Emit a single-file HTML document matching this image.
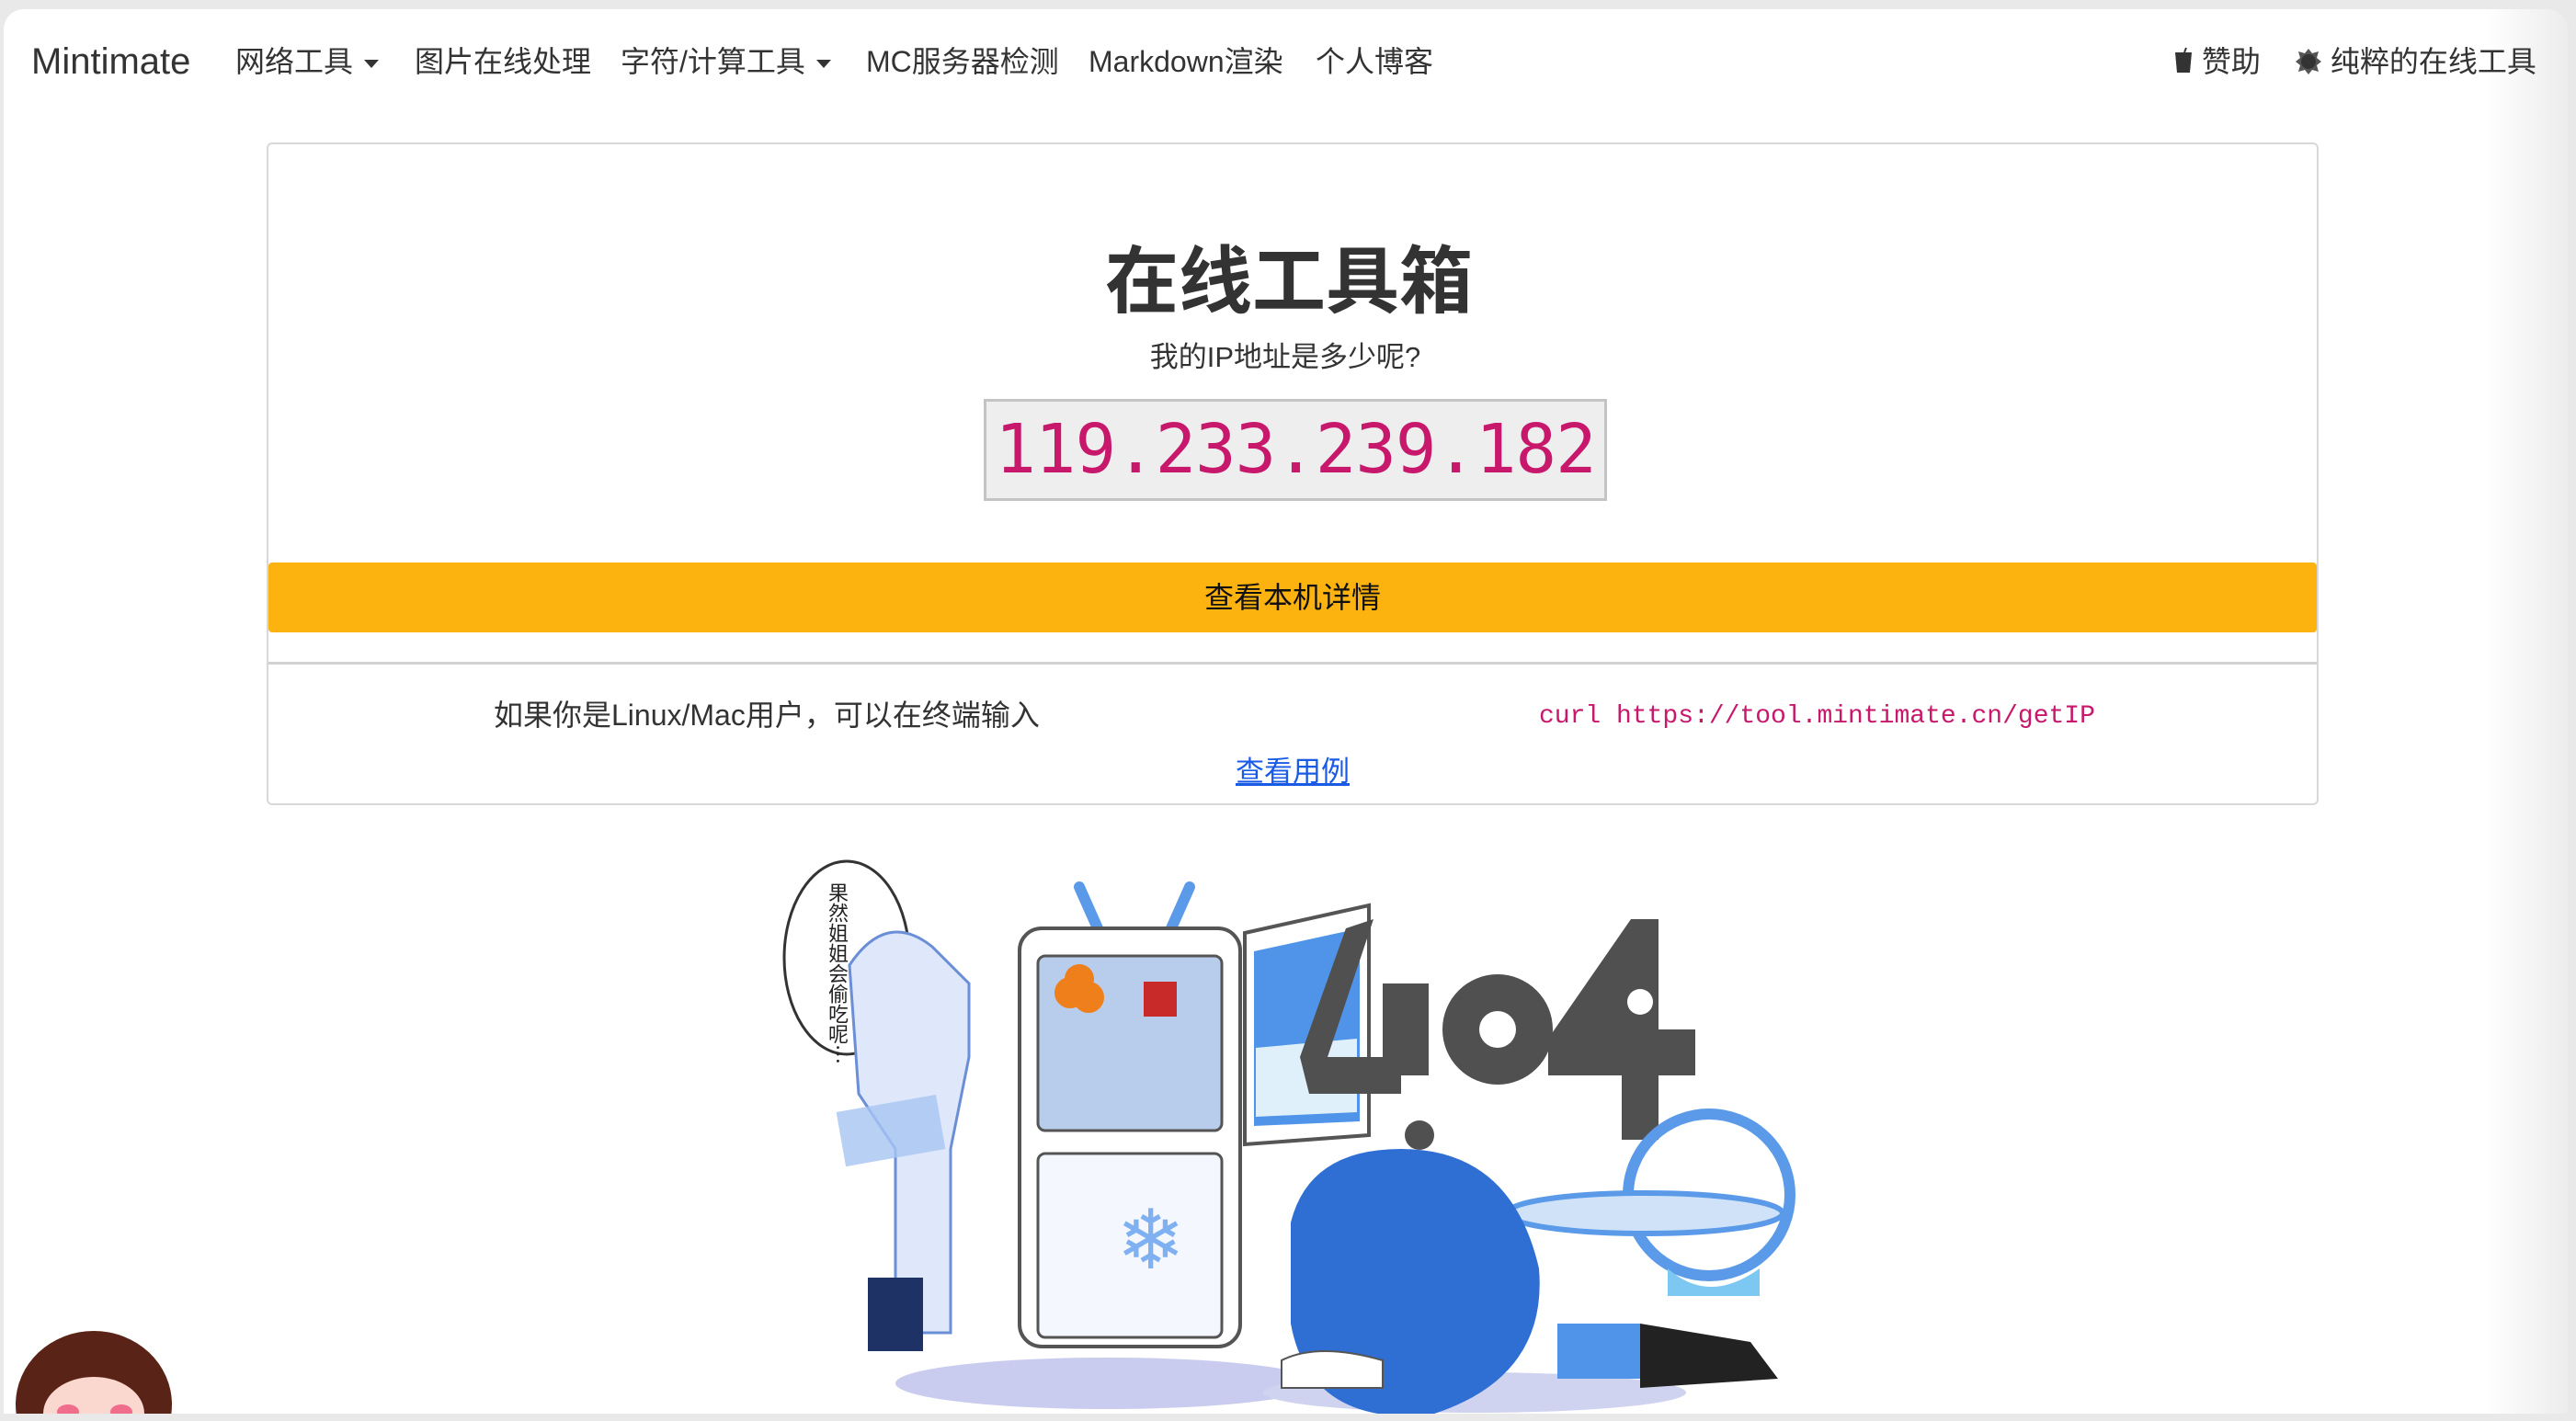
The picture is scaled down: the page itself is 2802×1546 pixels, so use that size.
<!DOCTYPE html>
<html><head><meta charset="utf-8"><style>
*{margin:0;padding:0;box-sizing:border-box}
body{width:2802px;height:1546px;background:#e9e9e9;overflow:hidden;font-family:"Liberation Sans","Noto Sans CJK SC",sans-serif;color:#333;position:relative}
.win{position:absolute;left:4px;top:10px;width:2789px;height:1528px;background:linear-gradient(90deg,#fff 0,#fff 2700px,#ececec 2789px);border-radius:22px 22px 0 0;overflow:hidden}
.nav{position:absolute;top:31px;left:0;width:100%;height:52px;font-size:32px;color:#333}
.nav span{position:absolute;top:0;white-space:nowrap;line-height:52px}
.caret{display:inline-block;border-top:9px solid #333;border-left:8px solid transparent;border-right:8px solid transparent;vertical-align:middle;margin-left:12px}
.card{position:absolute;left:286px;top:145px;width:2232px;height:721px;border:2px solid #d8d8d8;border-radius:6px;background:#fff}
.c{position:absolute;left:0;width:100%;text-align:center}
.ip{position:absolute;left:778px;top:277px;width:678px;height:111px;background:#eee;border:3px solid #c4c4c4;font-family:"DejaVu Sans Mono","Liberation Mono",monospace;color:#c7186c;font-size:74px;text-align:center;line-height:105px;letter-spacing:-1px}
.btn{position:absolute;left:0;top:455px;width:100%;height:76px;background:#fcb310;border-radius:4px;text-align:center;font-size:32px;line-height:76px;color:#111}
</style></head><body>
<div class="win">
<div class="nav">
<span style="left:30px;font-size:40px">Mintimate</span>
<span style="left:252px">网络工具<i class="caret"></i></span>
<span style="left:447px">图片在线处理</span>
<span style="left:671px">字符/计算工具<i class="caret"></i></span>
<span style="left:938px">MC服务器检测</span>
<span style="left:1180px">Markdown渲染</span>
<span style="left:1427px">个人博客</span>
<span style="left:2360px"><svg width="22" height="30" viewBox="0 0 22 30" style="vertical-align:-3px"><path d="M2 6h18l-2 22H4z" fill="#333"/><path d="M12 6l2-5" stroke="#333" stroke-width="2"/></svg> 赞助</span>
<span style="left:2492px"><svg width="30" height="30" viewBox="0 0 30 30" style="vertical-align:-4px"><polygon points="15,1 19,6 26,4 24,11 29,15 24,19 26,26 19,24 15,29 11,24 4,26 6,19 1,15 6,11 4,4 11,6" fill="#555"/><circle cx="15" cy="15" r="8" fill="#333"/></svg> 纯粹的在线工具</span>
</div>
<div class="card">
<div class="c" style="top:100px;font-size:80px;font-weight:bold;line-height:100px;color:#333;margin-left:-4px">在线工具箱</div>
<div class="c" style="top:212px;font-size:31px;line-height:40px;margin-left:-8px">我的IP地址是多少呢?</div>
<div class="ip">119.233.239.182</div>
<div class="btn">查看本机详情</div>
<div style="position:absolute;left:0;top:563px;width:100%;border-top:3px solid #d2d2d2"></div>
<div style="position:absolute;left:245px;top:601px;font-size:32px;line-height:40px">如果你是Linux/Mac用户，可以在终端输入</div>
<div style="position:absolute;left:1382px;top:603px;font-size:28px;line-height:40px;font-family:'Liberation Mono',monospace;color:#c7186c">curl https://tool.mintimate.cn/getIP</div>
<div class="c" style="top:663px;font-size:31px;line-height:40px"><u style="color:#1a5be6">查看用例</u></div>
</div>
<svg style="position:absolute;left:830px;top:900px" width="1160" height="640" viewBox="830 900 1160 640">
<ellipse cx="1200" cy="1495" rx="230" ry="28" fill="#c9ccee"/>
<ellipse cx="1600" cy="1505" rx="230" ry="22" fill="#d0d3f0"/>
<ellipse cx="917" cy="1032" rx="68" ry="105" fill="#fff" stroke="#333" stroke-width="3"/>
<text x="908" y="950" font-size="22" font-family="Noto Sans CJK SC" fill="#222" writing-mode="tb">果然姐姐会偷吃呢…</text>
<circle cx="934" cy="1150" r="6" fill="none" stroke="#333" stroke-width="2"/>
<path d="M920 1040 q40-60 90-20 l40 40 v80 l-20 100 v200 h-60 v-200 l-40-60z" fill="#dfe8fb" stroke="#6b8fd6" stroke-width="3"/>
<path d="M940 1380h60v80h-60z" fill="#1e3266"/>
<rect x="910" y="1190" width="110" height="60" fill="#a7c4f3" opacity=".8" transform="rotate(-10 965 1220)"/>
<path d="M1170 955l20 45M1290 955l-20 45" stroke="#5a9ae8" stroke-width="12" stroke-linecap="round"/>
<rect x="1105" y="1000" width="240" height="455" rx="24" fill="#fff" stroke="#555" stroke-width="4"/>
<rect x="1125" y="1030" width="200" height="190" rx="8" fill="#b8ccec" stroke="#555" stroke-width="3"/>
<rect x="1125" y="1245" width="200" height="200" rx="8" fill="#f4f7fd" stroke="#555" stroke-width="3"/>
<circle cx="1160" cy="1070" r="17" fill="#ef7f1a"/><circle cx="1180" cy="1075" r="17" fill="#ef7f1a"/><circle cx="1170" cy="1055" r="16" fill="#ef7f1a"/>
<rect x="1240" y="1058" width="36" height="38" fill="#c82a2a"/>
<text x="1210" y="1370" font-size="90" fill="#7fb1f2" font-family="DejaVu Sans">❄</text>
<path d="M1350 1005l135-30v250l-135 10z" fill="#fff" stroke="#555" stroke-width="4"/>
<path d="M1360 1025l115-25v210l-115 5z" fill="#4f94e8"/>
<path d="M1362 1130l110-10v80l-110 5z" fill="#dff0fb"/>
<g fill="#505050">
<path d="M1460 1000 l30-10 l-50 150 h80 l0 40 h-100 l-10-40z"/>
<path d="M1500 1060h50v100h-50z"/>
<ellipse cx="1625" cy="1110" rx="60" ry="60"/>
<path d="M1770 990 l30 0 l0 120 l40 0 0 50 -40 0 0 70 -40 0 0-70 -80 0 0-40z"/>
<circle cx="1540" cy="1225" r="16"/><circle cx="1545" cy="1258" r="10"/>
</g>
<circle cx="1625" cy="1110" r="20" fill="#fff"/>
<circle cx="1780" cy="1080" r="14" fill="#fff"/>
<circle cx="1855" cy="1290" r="88" fill="none" stroke="#5a9ae8" stroke-width="12"/>
<ellipse cx="1785" cy="1310" rx="150" ry="22" fill="#cfe2f8" stroke="#5a9ae8" stroke-width="6"/>
<path d="M1810 1370 q45 40 100 0 v30 h-100z" fill="#7cc8f2"/>
<path d="M1400 1320 q20-80 120-80 q120 0 150 130 q10 120-120 160 q-130 10-150-100z" fill="#2f6fd3"/>
<path d="M1690 1430h90v60h-90z" fill="#4f94e8"/>
<path d="M1780 1430l120 20 30 40-150 10z" fill="#222"/>
<path d="M1390 1470 q40-20 110 0 v30 h-110z" fill="#fff" stroke="#555" stroke-width="2"/>
</svg>
<svg style="position:absolute;left:10px;top:1428px" width="180" height="110" viewBox="0 0 180 110">
<ellipse cx="88" cy="90" rx="85" ry="80" fill="#5a2317"/>
<ellipse cx="88" cy="100" rx="55" ry="40" fill="#fbd8cf"/>
<ellipse cx="60" cy="98" rx="12" ry="8" fill="#f06d8c"/><ellipse cx="118" cy="98" rx="12" ry="8" fill="#f06d8c"/>
</svg>
</div>
</body></html>
